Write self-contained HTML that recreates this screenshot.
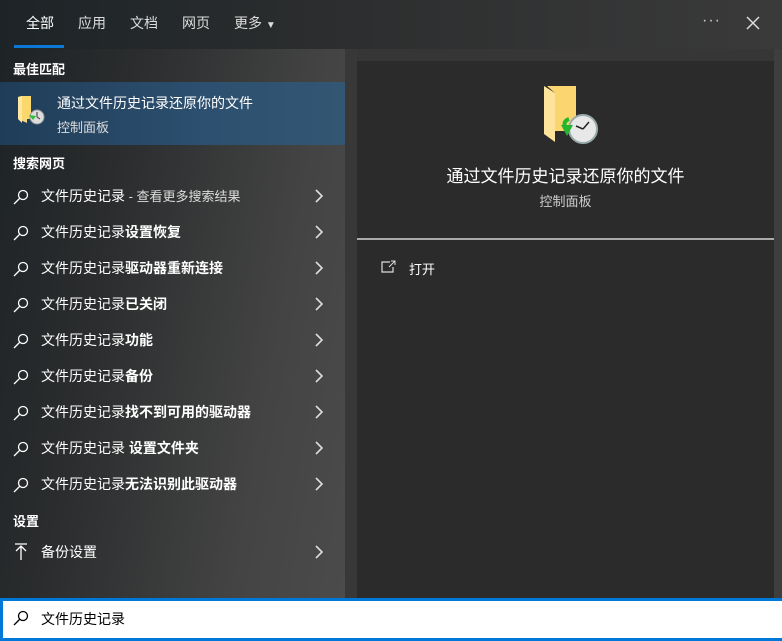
<!DOCTYPE html><html><head><meta charset="utf-8"><style>
*{margin:0;padding:0;box-sizing:border-box}
body{width:782px;height:641px;overflow:hidden;background:#363636;font-family:"Liberation Sans","Noto Sans CJK SC",sans-serif;color:#fff;position:relative}
.top{position:absolute;left:0;top:0;width:782px;height:49px;background:linear-gradient(90deg,#1d2427,#2b2d2e 40%,#3a3a3a)}
.tab{position:absolute;top:13px;font-size:14px;color:#ddd}
.left{position:absolute;left:0;top:49px;width:345px;height:549px;background:linear-gradient(100deg,#1e2326 0%,#2a2c2d 30%,#444 75%,#4b4b4b 100%)}
.gap{position:absolute;left:345px;top:49px;width:12px;height:549px;background:#383838}
.right{position:absolute;left:357px;top:61px;width:417px;height:537px;background:#2b2b2b}
.rb{position:absolute;left:774px;top:49px;width:8px;height:549px;background:#3e3e3e}
.h{position:absolute;left:13px;font-size:13px;font-weight:bold;color:#fff}
.row{position:absolute;left:0;width:345px;height:36px;font-size:14px;color:#fff}
.row .t{position:absolute;left:41px;top:8px}
.row svg.s{position:absolute;left:13px;top:11px}
.row .c{position:absolute;left:314px;top:11px}
.sel{position:absolute;left:0;top:82px;width:345px;height:63px;background:linear-gradient(90deg,#1f3d58,#2d5070 60%,#335673)}
.search{position:absolute;left:0;top:598px;width:782px;height:43px;background:#fff;border:3px solid #0078d7;border-right:none}
</style></head><body>
<div class="top"></div>
<div class="tab" style="left:26px;color:#fff">全部</div>
<div class="tab" style="left:78px">应用</div>
<div class="tab" style="left:130px">文档</div>
<div class="tab" style="left:182px">网页</div>
<div class="tab" style="left:234px">更多 <span style="font-size:10px">▼</span></div>
<div style="position:absolute;left:14px;top:45px;width:50px;height:3px;background:#0a78d4"></div>
<div style="position:absolute;left:702px;top:12px;font-size:16px;color:#ccc;letter-spacing:1px">···</div>
<svg style="position:absolute;left:746px;top:16px" width="14" height="14"><path d="M1 1L13 13M13 1L1 13" stroke="#ddd" stroke-width="1.5"/></svg>
<div class="left"></div><div class="gap"></div><div class="right"></div><div class="rb"></div>
<div class="h" style="top:59px">最佳匹配</div>
<div class="sel"></div>
<svg style="position:absolute;left:17px;top:95px" width="30" height="32"><path d="M1 2L5 1L10 3V28L1 24Z" fill="#f6d77a"/><path d="M5 1H14V24H5Z" fill="#fbd86b"/><path d="M1 2L5 1V28L1 24Z" fill="#fde7a5"/><circle cx="20" cy="22" r="7" fill="#ddd" stroke="#999"/><path d="M20 22L20 17M20 22L23 24" stroke="#333"/><path d="M12 20L16 25L19 21Z" fill="#2fbf3a"/></svg>
<div style="position:absolute;left:57px;top:93px;font-size:14px">通过文件历史记录还原你的文件</div>
<div style="position:absolute;left:57px;top:117px;font-size:13px;color:#ddd">控制面板</div>
<div class="h" style="top:153px">搜索网页</div>
<div class="row" style="top:178px"><svg class="s" width="16" height="16"><circle cx="10" cy="6" r="4.5" fill="none" stroke="#fff" stroke-width="1.3"/><path d="M7 9L1 15" stroke="#fff" stroke-width="1.3"/></svg><span class="t">文件历史记录<span style="font-size:13px;color:#ddd"> - 查看更多搜索结果</span></span><svg class="c" width="10" height="14"><path d="M2 1L8 7L2 13" fill="none" stroke="#ddd" stroke-width="1.6"/></svg></div>
<div class="row" style="top:214px"><svg class="s" width="16" height="16"><circle cx="10" cy="6" r="4.5" fill="none" stroke="#fff" stroke-width="1.3"/><path d="M7 9L1 15" stroke="#fff" stroke-width="1.3"/></svg><span class="t">文件历史记录<b>设置恢复</b></span><svg class="c" width="10" height="14"><path d="M2 1L8 7L2 13" fill="none" stroke="#ddd" stroke-width="1.6"/></svg></div>
<div class="row" style="top:250px"><svg class="s" width="16" height="16"><circle cx="10" cy="6" r="4.5" fill="none" stroke="#fff" stroke-width="1.3"/><path d="M7 9L1 15" stroke="#fff" stroke-width="1.3"/></svg><span class="t">文件历史记录<b>驱动器重新连接</b></span><svg class="c" width="10" height="14"><path d="M2 1L8 7L2 13" fill="none" stroke="#ddd" stroke-width="1.6"/></svg></div>
<div class="row" style="top:286px"><svg class="s" width="16" height="16"><circle cx="10" cy="6" r="4.5" fill="none" stroke="#fff" stroke-width="1.3"/><path d="M7 9L1 15" stroke="#fff" stroke-width="1.3"/></svg><span class="t">文件历史记录<b>已关闭</b></span><svg class="c" width="10" height="14"><path d="M2 1L8 7L2 13" fill="none" stroke="#ddd" stroke-width="1.6"/></svg></div>
<div class="row" style="top:322px"><svg class="s" width="16" height="16"><circle cx="10" cy="6" r="4.5" fill="none" stroke="#fff" stroke-width="1.3"/><path d="M7 9L1 15" stroke="#fff" stroke-width="1.3"/></svg><span class="t">文件历史记录<b>功能</b></span><svg class="c" width="10" height="14"><path d="M2 1L8 7L2 13" fill="none" stroke="#ddd" stroke-width="1.6"/></svg></div>
<div class="row" style="top:358px"><svg class="s" width="16" height="16"><circle cx="10" cy="6" r="4.5" fill="none" stroke="#fff" stroke-width="1.3"/><path d="M7 9L1 15" stroke="#fff" stroke-width="1.3"/></svg><span class="t">文件历史记录<b>备份</b></span><svg class="c" width="10" height="14"><path d="M2 1L8 7L2 13" fill="none" stroke="#ddd" stroke-width="1.6"/></svg></div>
<div class="row" style="top:394px"><svg class="s" width="16" height="16"><circle cx="10" cy="6" r="4.5" fill="none" stroke="#fff" stroke-width="1.3"/><path d="M7 9L1 15" stroke="#fff" stroke-width="1.3"/></svg><span class="t">文件历史记录<b>找不到可用的驱动器</b></span><svg class="c" width="10" height="14"><path d="M2 1L8 7L2 13" fill="none" stroke="#ddd" stroke-width="1.6"/></svg></div>
<div class="row" style="top:430px"><svg class="s" width="16" height="16"><circle cx="10" cy="6" r="4.5" fill="none" stroke="#fff" stroke-width="1.3"/><path d="M7 9L1 15" stroke="#fff" stroke-width="1.3"/></svg><span class="t">文件历史记录 <b>设置文件夹</b></span><svg class="c" width="10" height="14"><path d="M2 1L8 7L2 13" fill="none" stroke="#ddd" stroke-width="1.6"/></svg></div>
<div class="row" style="top:466px"><svg class="s" width="16" height="16"><circle cx="10" cy="6" r="4.5" fill="none" stroke="#fff" stroke-width="1.3"/><path d="M7 9L1 15" stroke="#fff" stroke-width="1.3"/></svg><span class="t">文件历史记录<b>无法识别此驱动器</b></span><svg class="c" width="10" height="14"><path d="M2 1L8 7L2 13" fill="none" stroke="#ddd" stroke-width="1.6"/></svg></div>
<div class="h" style="top:511px">设置</div>
<div class="row" style="top:534px"><svg class="s" width="16" height="18" style="top:9px"><path d="M2 1H14M8 3V17M3 8L8 3L13 8" fill="none" stroke="#fff" stroke-width="1.3"/></svg><span class="t">备份设置</span><svg class="c" width="10" height="14"><path d="M2 1L8 7L2 13" fill="none" stroke="#ddd" stroke-width="1.6"/></svg></div>
<svg style="position:absolute;left:543px;top:85px" width="56" height="60"><path d="M1 1L12 8V57L1 49Z" fill="#fde49a"/><path d="M4 1H33V46H12V8Z" fill="#fbd670"/><circle cx="40" cy="44" r="14" fill="#e8e8e8" stroke="#9aa" stroke-width="2"/><path d="M40 44L33 41M40 44L46 37" stroke="#222" stroke-width="1.5"/><path d="M18 40H30L24 51Z" fill="#26b52f"/><path d="M26 34Q20 36 22 42" stroke="#26b52f" stroke-width="4" fill="none"/></svg>
<div style="position:absolute;left:357px;width:417px;top:162px;text-align:center;font-size:17px">通过文件历史记录还原你的文件</div>
<div style="position:absolute;left:357px;width:417px;top:191px;text-align:center;font-size:13px;color:#ccc">控制面板</div>
<div style="position:absolute;left:357px;top:238px;width:417px;height:2px;background:#aaa"></div>
<svg style="position:absolute;left:381px;top:260px" width="16" height="14"><path d="M9 2H1V12H12V7" fill="none" stroke="#ddd" stroke-width="1.2"/><path d="M8 7L14 1M10 1H14V5" fill="none" stroke="#ddd" stroke-width="1"/></svg>
<div style="position:absolute;left:409px;top:259px;font-size:13px">打开</div>
<div class="search"></div>
<svg style="position:absolute;left:13px;top:610px" width="16" height="16"><circle cx="10" cy="6" r="4.5" fill="none" stroke="#000" stroke-width="1.3"/><path d="M7 9L1 15" stroke="#000" stroke-width="1.3"/></svg>
<div style="position:absolute;left:41px;top:609px;font-size:14px;color:#000">文件历史记录</div>
</body></html>
